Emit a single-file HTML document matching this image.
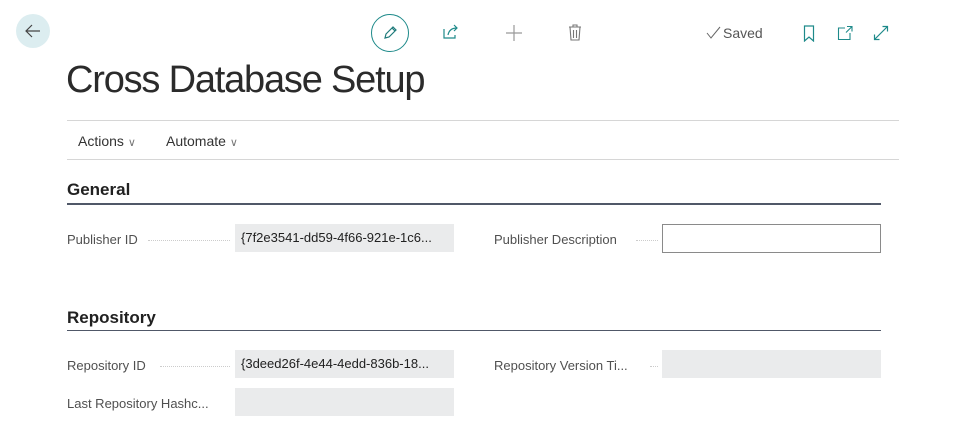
<!DOCTYPE html>
<html><head><meta charset="utf-8"><style>
*{margin:0;padding:0;box-sizing:border-box}
body{width:965px;height:429px;background:#fff;font-family:"Liberation Sans",sans-serif;position:relative;overflow:hidden;color:#212121}
.a{position:absolute}
.lbl{font-size:13px;color:#505050;white-space:nowrap}
.dots{border-bottom:1px dotted #ccc;height:1px}
.box{background:#eaebec;height:28px;font-size:13px;line-height:28px;padding-left:6px;color:#212121;white-space:nowrap;overflow:hidden}
</style></head><body>
<div class="a" style="left:16px;top:14px;width:34px;height:34px;border-radius:50%;background:#dcedf0"></div>
<svg class="a" style="left:24px;top:22px" width="18" height="18" viewBox="0 0 18 18"><path d="M16 9H2M8 3L2 9l6 6" stroke="#444" stroke-width="1.2" fill="none"/></svg>
<div class="a" style="left:371px;top:14px;width:38px;height:38px;border-radius:50%;border:1.5px solid #1e8a8a"></div>
<svg class="a" style="left:381px;top:24px" width="18" height="18" viewBox="0 0 18 18"><path d="M4 14l1-4 7-7 3 3-7 7zM11 4l3 3" stroke="#1e7a7a" stroke-width="1.2" fill="none"/></svg>
<svg class="a" style="left:441px;top:23px" width="20" height="18" viewBox="0 0 20 18"><path d="M3 6v9h11v-3M7 12c1-5 4-7 9-7M13 2l3 3-3 3" stroke="#1e8a8a" stroke-width="1.2" fill="none"/></svg>
<svg class="a" style="left:505px;top:24px" width="18" height="18" viewBox="0 0 18 18"><path d="M9 1v16M1 9h16" stroke="#999" stroke-width="1.2"/></svg>
<svg class="a" style="left:567px;top:23px" width="16" height="19" viewBox="0 0 16 19"><path d="M2 4h12M6 4V2h4v2M3 4l1 13h8l1-13M6.5 7v8M9.5 7v8" stroke="#777" stroke-width="1.1" fill="none"/></svg>
<svg class="a" style="left:706px;top:26px" width="16" height="14" viewBox="0 0 16 14"><path d="M1 7l4 5 9-11" stroke="#666" stroke-width="1" fill="none"/></svg>
<div class="a" style="left:723px;top:25px;font-size:14px;color:#555">Saved</div>
<svg class="a" style="left:803px;top:25px" width="12" height="17" viewBox="0 0 12 17"><path d="M1.5 1h9v15l-4.5-4-4.5 4z" stroke="#1e8a8a" stroke-width="1.2" fill="none"/></svg>
<svg class="a" style="left:837px;top:25px" width="16" height="16" viewBox="0 0 16 16"><path d="M8 3H1.5v11.5H13V8M10 1.5h5v5M15 1.5l-6 6" stroke="#1e8a8a" stroke-width="1.1" fill="none"/></svg>
<svg class="a" style="left:873px;top:25px" width="16" height="16" viewBox="0 0 16 16"><path d="M1.5 14.5l13-13M9.5 1.5h5v5M1.5 9.5v5h5" stroke="#1e8a8a" stroke-width="1.2" fill="none"/></svg>
<div class="a" style="left:66px;top:59px;font-size:38px;color:#2b2b2b;letter-spacing:-1.2px">Cross Database Setup</div>
<div class="a" style="left:67px;top:120px;width:832px;height:1px;background:#d6d6d6"></div>
<div class="a" style="left:78px;top:133px;font-size:14px;color:#333">Actions <span style="color:#777;font-size:11px">&#8744;</span></div>
<div class="a" style="left:166px;top:133px;font-size:14px;color:#333">Automate <span style="color:#777;font-size:11px">&#8744;</span></div>
<div class="a" style="left:67px;top:159px;width:832px;height:1px;background:#d6d6d6"></div>
<div class="a" style="left:67px;top:180px;font-size:17px;font-weight:bold;color:#212121">General</div>
<div class="a" style="left:67px;top:203px;width:814px;height:2px;background:#505868"></div>
<div class="a lbl" style="left:67px;top:232px">Publisher ID</div>
<div class="a dots" style="left:148px;top:240px;width:82px"></div>
<div class="a box" style="left:235px;top:224px;width:219px">{7f2e3541-dd59-4f66-921e-1c6...</div>
<div class="a lbl" style="left:494px;top:232px">Publisher Description</div>
<div class="a dots" style="left:636px;top:240px;width:22px"></div>
<div class="a" style="left:662px;top:224px;width:219px;height:29px;border:1px solid #8a8a8a"></div>
<div class="a" style="left:67px;top:308px;font-size:17px;font-weight:bold">Repository</div>
<div class="a" style="left:67px;top:330px;width:814px;height:1px;background:#505868"></div>
<div class="a lbl" style="left:67px;top:358px">Repository ID</div>
<div class="a dots" style="left:160px;top:366px;width:70px"></div>
<div class="a box" style="left:235px;top:350px;width:219px">{3deed26f-4e44-4edd-836b-18...</div>
<div class="a lbl" style="left:494px;top:358px">Repository Version Ti...</div>
<div class="a dots" style="left:650px;top:366px;width:8px"></div>
<div class="a box" style="left:662px;top:350px;width:219px"></div>
<div class="a lbl" style="left:67px;top:396px">Last Repository Hashc...</div>
<div class="a box" style="left:235px;top:388px;width:219px"></div>
</body></html>
